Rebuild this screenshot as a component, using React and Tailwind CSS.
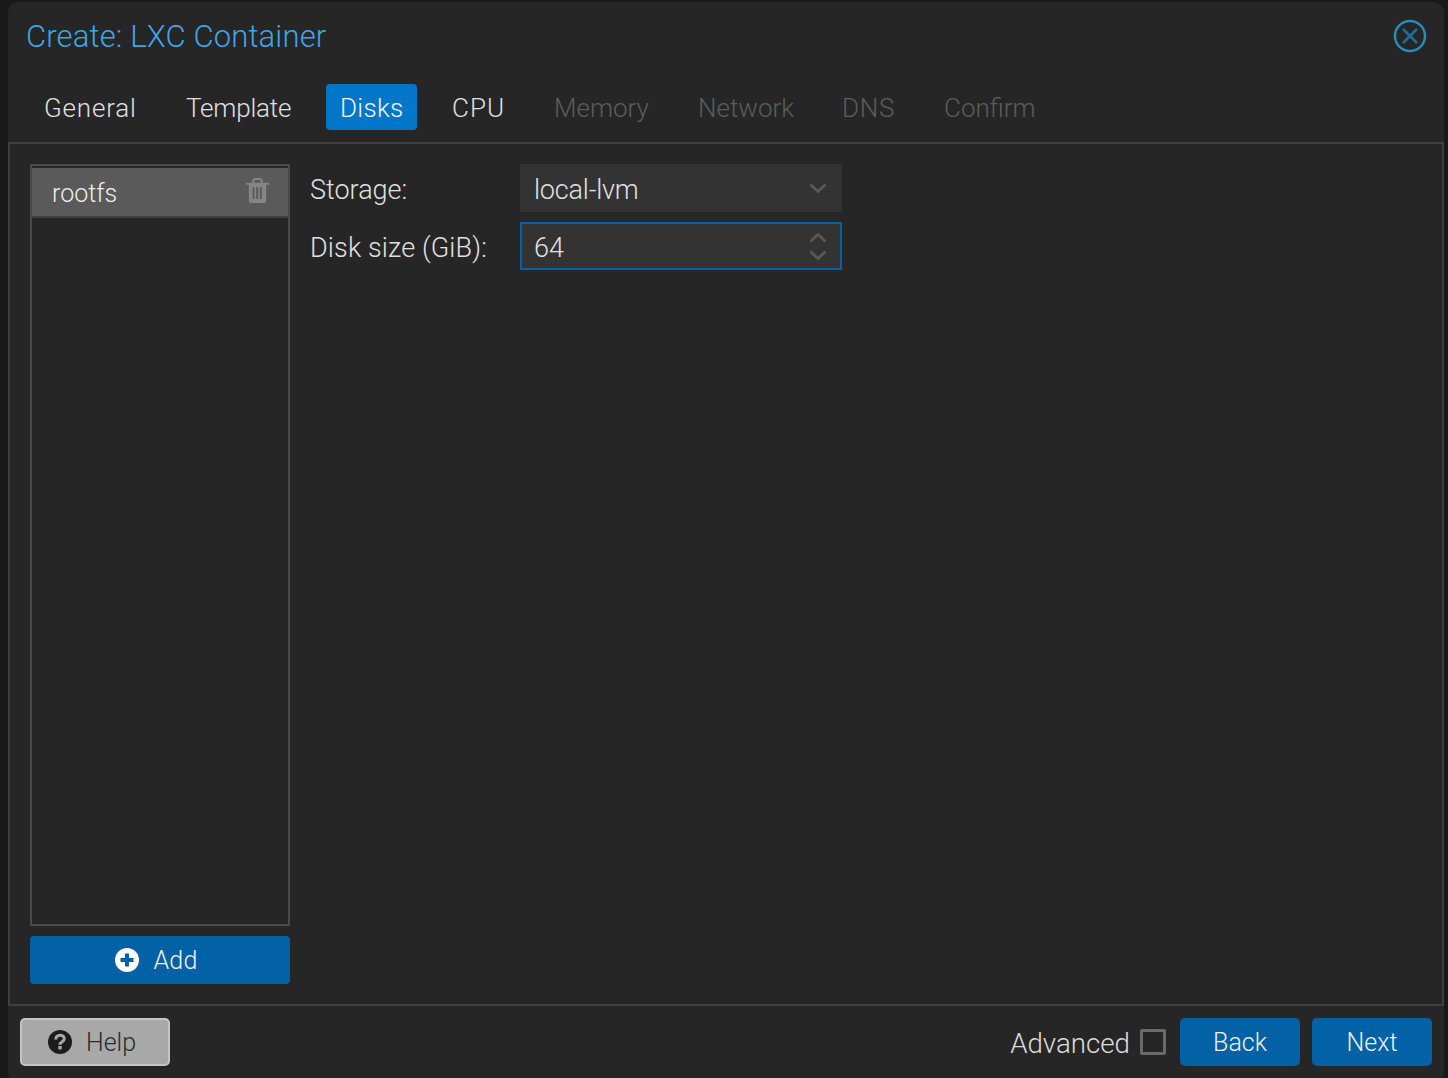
const font = { fontFamily: "Roboto, sans-serif" };

const tabs = [
  { name: "General", state: "on", cls: "w-[121px] tracking-[0.8px]" },
  { name: "Template", state: "on", cls: "w-[133px] tracking-[-0.2px]" },
  { name: "Disks", state: "active", cls: "w-[91px] tracking-[0.3px]" },
  { name: "CPU", state: "on", cls: "w-[81px] tracking-[1px]" },
  { name: "Memory", state: "off", cls: "w-[123px]" },
  { name: "Network", state: "off", cls: "w-[123px]" },
  { name: "DNS", state: "off", cls: "w-[81px] tracking-[0.7px]" },
  { name: "Confirm", state: "off", cls: "w-[119px]" },
];

const Tab = ({ name, state, cls }) => {
  let look = "text-[#e0e0e0]";
  if (state === "active") look = "rounded-[4px] bg-[#0277c9] text-[#f2f2f2]";
  if (state === "off") look = "text-[#5c5c5c]";
  return (
    <div className={`flex h-[46px] shrink-0 items-center px-[14px] pt-[2px] ${look} ${cls}`}>
      {name}
    </div>
  );
};

const Chevron = ({ up }) => (
  <svg width="18" height="11" viewBox="0 0 18 11" fill="none">
    <path
      d={up ? "M1.5 9.500L9 2.500l7.500 7" : "M1.500 1.500L9 8.500l7.500-7"}
      stroke="#585858"
      strokeWidth="2.800"
    />
  </svg>
);

const Trash = () => (
  <svg className="mb-1" width="23" height="25" viewBox="0 0 68 75">
    <path
      fill="#858585"
      fillRule="evenodd"
      d="M0 14H18V10Q18 0 28 0H40Q50 0 50 10V14H68V20H60V69Q60 75 54 75H14Q8 75 8 69V20H0ZM24 14H44V10Q44 6 40 6H28Q24 6 24 10ZM19 28V63H25V28ZM30 28V63H36V28ZM41 28V63H47V28Z"
    />
  </svg>
);

const PlusCircle = () => (
  <svg width="24" height="24" viewBox="0 0 24 24">
    <circle cx="12" cy="12" r="12" fill="#ffffff" />
    <path d="M12 5.500v13M5.500 12h13" stroke="#0361a6" strokeWidth="4" />
  </svg>
);

const QuestionCircle = () => (
  <svg width="24" height="24" viewBox="0 0 24 24">
    <circle cx="12" cy="12" r="12" fill="#1c1c1c" />
    <path
      d="M7.800 9.500C7.800 6.800 9.600 5.200 12 5.200C14.600 5.200 16.300 6.800 16.300 8.800C16.300 11.600 12 12 12 14.800"
      fill="none"
      stroke="#a8a8a8"
      strokeWidth="3"
    />
    <rect x="10.300" y="16" width="3.400" height="3.400" fill="#a8a8a8" />
  </svg>
);

const App = () => {
  return (
    <div
      className="h-[1078px] w-[1448px] overflow-hidden bg-[#191919] pr-1 pl-2 pt-[2px]"
      style={font}
    >
      <div className="flex h-[1080px] flex-col rounded-[10px] bg-[#262626] font-light">
        {/* title */}
        <div className="flex h-[68px] shrink-0 items-center justify-between pr-[17px] pl-[18px]">
          <span className="pt-[2px] text-[31px] tracking-[0.15px] text-[#3fa5e8]">
            Create: LXC Container
          </span>
          <svg width="34" height="34" viewBox="0 0 34 34" fill="none">
            <circle cx="17" cy="17" r="15" stroke="#2a8ab8" strokeWidth="2.500" />
            <path d="M10 10l14 14M24 10L10 24" stroke="#1d6f99" strokeWidth="2.500" />
          </svg>
        </div>

        {/* tabs */}
        <div className="flex h-[72px] shrink-0 items-start gap-[21px] pt-[14px] pl-[22px] text-[26px]">
          {tabs.map(tab => (
            <Tab key={tab.name} name={tab.name} state={tab.state} cls={tab.cls} />
          ))}
        </div>

        {/* panel */}
        <div className="flex h-[864px] shrink-0 gap-[20px] border-2 border-[#3f3f3f] pt-5 pr-5 pb-5 pl-5">
          <div className="flex w-[260px] shrink-0 flex-col gap-[10px]">
            <div className="flex-1 border-2 border-[#4a4a4a]">
              <div className="mt-[2px] flex h-[50px] items-center justify-between border-b-2 border-[#3f3f3f] bg-[#5a5a5a] pr-[19px] pl-5 text-[25px] text-[#ececec]">
                <span className="pt-1">rootfs</span>
                <Trash />
              </div>
            </div>
            <div className="flex h-12 items-center justify-center gap-[14px] rounded-[4px] bg-[#0361a6] pr-[7px] text-[25px] text-[#f0f0f0]">
              <PlusCircle />
              <span className="pt-[2px] tracking-[0.2px]">Add</span>
            </div>
          </div>

          <div className="flex flex-col gap-[10px] text-[27px] text-[#e0e0e0]">
            <div className="flex h-12 items-center">
              <span className="w-[210px] pt-[5px]">Storage:</span>
              <div className="flex h-12 w-[322px] items-center justify-between bg-[#333333] pr-[15px] pl-[14px]">
                <span className="pt-[5px] tracking-[-0.2px]">local-lvm</span>
                <Chevron />
              </div>
            </div>
            <div className="flex h-12 items-center">
              <span className="w-[210px] pt-[5px] tracking-[0.15px]">Disk size (GiB):</span>
              <div className="flex h-12 w-[322px] items-center justify-between border-2 border-[#0361a6] bg-[#333333] pr-[13px] pl-3">
                <span className="pt-[5px]">64</span>
                <div className="flex flex-col gap-[7px]">
                  <Chevron up />
                  <Chevron />
                </div>
              </div>
            </div>
          </div>
        </div>

        {/* footer */}
        <div className="flex h-[72px] shrink-0 items-start justify-between pt-3 pr-3 pl-3">
          <div className="flex h-12 w-[150px] items-center justify-center gap-[14px] rounded-[5px] border-2 border-[#c4c4c4] bg-[#a8a8a8] pr-[6px] text-[25px] text-[#2b2b2b]">
            <QuestionCircle />
            <span className="pt-[2px]">Help</span>
          </div>
          <div className="flex items-center">
            <span className="pt-1 text-[27.7px] text-[#dcdcdc]">Advanced</span>
            <div className="mr-[14px] ml-[10px] size-[26px] rounded-[2px] border-[3px] border-[#6a6a6a]" />
            <div className="flex h-12 w-[120px] items-center justify-center rounded-[5px] bg-[#0361a6] pt-[2px] text-[25px] text-[#f0f0f0]">
              Back
            </div>
            <div className="ml-3 flex h-12 w-[120px] items-center justify-center rounded-[5px] bg-[#0361a6] pt-[2px] text-[25px] text-[#f0f0f0]">
              Next
            </div>
          </div>
        </div>
      </div>
    </div>
  );
};

export default App;
